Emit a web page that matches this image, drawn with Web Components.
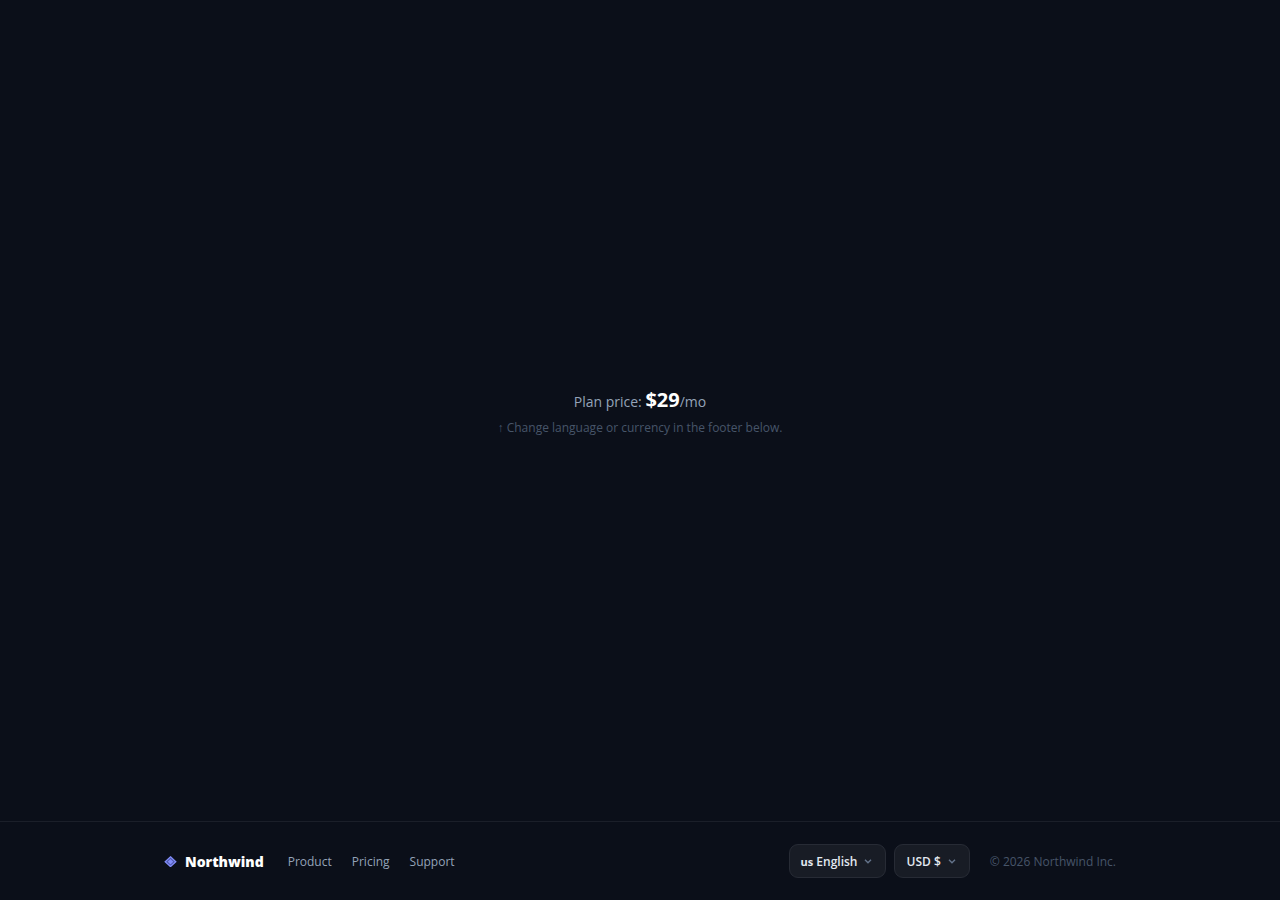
<!DOCTYPE html>
<html lang="en">
<head>
<meta charset="utf-8">
<meta name="viewport" content="width=device-width, initial-scale=1">
<title>Northwind</title>
<style>
  html { background: #0b0f19; }
  body { margin: 0; font-family: "Open Sans", "Noto Sans", sans-serif; color: #94a3b8; }
</style>
</head>
<body>
<nw-page>
  <nw-price amount="$29"></nw-price>
  <nw-footer slot="footer"></nw-footer>
</nw-page>

<script>
const define = (name, html, setup) => customElements.define(name, class extends HTMLElement {
  constructor() {
    super();
    this.attachShadow({ mode: "open" }).innerHTML = html;
  }
  connectedCallback() { if (setup) setup(this, this.shadowRoot); }
});

define("nw-page", `
  <style>
    :host { display: flex; flex-direction: column; min-height: 100vh; background: #0b0f19; }
    main { flex: 1; display: grid; place-items: center; padding: 0 24px; }
  </style>
  <main><slot></slot></main>
  <slot name="footer"></slot>
`);

define("nw-price", `
  <style>
    :host { display: block; text-align: center; }
    p { margin: 0; }
    .price { font-size: 14px; line-height: 28px; }
    strong { font-size: 20px; font-weight: 700; color: #fff; }
    .hint { font-size: 12px; line-height: 16px; margin-top: 4px; color: #475569; }
  </style>
  <p class="price">Plan price: <strong></strong>/mo</p>
  <p class="hint">↑ Change language or currency in the footer below.</p>
`, (host, root) => { root.querySelector("strong").textContent = host.getAttribute("amount"); });

define("nw-link", `
  <style>
    :host { display: block; }
    a { display: block; color: #94a3b8; font-size: 12px; line-height: 18px; text-decoration: none; }
    a:hover { color: #fff; }
  </style>
  <a href="#"><slot></slot></a>
`);

define("nw-picker", `
  <style>
    :host { display: block; }
    button { display: flex; align-items: center; gap: 5px; height: 34px; box-sizing: border-box; padding: 0 11px;
      border: 1px solid #272b35; border-radius: 9px; background: #181c25; color: #e2e8f0;
      font-family: inherit; font-size: 12px; font-weight: 600; line-height: 18px; white-space: nowrap; }
    .label { padding-top: 2px; }
    svg { display: block; width: 12px; height: 12px; fill: none; stroke: #64748b; stroke-width: 1.4; }
  </style>
  <button type="button" aria-haspopup="listbox" aria-expanded="false">
    <span class="label"><slot></slot></span>
    <svg viewBox="0 0 12 12" aria-hidden="true"><path d="M3 4.7 6 7.7 9 4.7"/></svg>
  </button>
`);

define("nw-brand", `
  <style>
    :host { display: flex; align-items: center; gap: 8px; }
    svg { display: block; width: 13px; height: 12px; }
    span { padding-top: 2px; font-size: 14px; line-height: 20px; font-weight: 800; color: #fff; }
  </style>
  <svg viewBox="0 0 13 12" aria-hidden="true">
    <path d="M6.5 1.8 11.8 6.7 6.5 11.6 1.2 6.7z" fill="#4c55a8" stroke="#818cf8" stroke-width="1.3"/>
    <path d="M6.5 4 9.3 6.7 6.5 9.4 3.7 6.7z" fill="#818cf8"/>
  </svg>
  <span>Northwind</span>
`);

define("nw-footer", `
  <style>
    :host { display: block; border-top: 1px solid #1b1f29; }
    footer { display: flex; align-items: center; gap: 24px; max-width: 952px; margin: 0 auto; padding: 22px 24px; }
    nav { display: flex; gap: 20px; padding-top: 2px; }
    .end { display: flex; align-items: center; gap: 20px; margin-left: auto; }
    .pickers { display: flex; gap: 8px; }
    small { padding-top: 2px; font-size: 12px; line-height: 18px; color: #475569; }
    .flag { font-size: 11px; font-weight: 700; }
  </style>
  <footer>
    <nw-brand></nw-brand>
    <nav aria-label="Footer"><nw-link>Product</nw-link><nw-link>Pricing</nw-link><nw-link>Support</nw-link></nav>
    <div class="end">
      <div class="pickers">
        <nw-picker><span class="flag">us</span> English</nw-picker>
        <nw-picker>USD $</nw-picker>
      </div>
      <small>© 2026 Northwind Inc.</small>
    </div>
  </footer>
`);
</script>
</body>
</html>
